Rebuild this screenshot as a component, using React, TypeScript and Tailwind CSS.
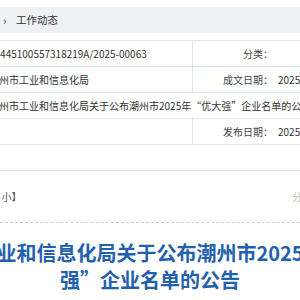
import React from "react";

const font = { fontFamily: '"Noto Sans CJK SC", "Noto Sans", sans-serif' };

function Row({ children }: { children: React.ReactNode }) {
  return <div className="flex h-[26px] border-t border-[#d9e5f0]">{children}</div>;
}

function LeftCell({ text }: { text: string }) {
  return (
    <div className="w-[193px] shrink-0 border-r border-[#d9e5f0] flex items-center overflow-hidden">
      <span className="ml-[-11px] whitespace-nowrap">{text}</span>
    </div>
  );
}

function RightCells({ label, value }: { label: string; value: string }) {
  return (
    <>
      <div className="w-[80px] shrink-0 flex items-center justify-end text-[#444]">{label}</div>
      <div className="flex-1 flex items-center pl-[5px] whitespace-nowrap overflow-hidden">{value}</div>
    </>
  );
}

export default function App() {
  return (
    <div className="w-[300px] h-[300px] overflow-hidden bg-white text-[10px] text-[#333]" style={font}>
      <div className="h-[7px]" />
      <div className="h-[26px] bg-[#eef1f4] flex items-center text-[10.5px] text-[#333]">
        <span className="ml-[3px] w-[13px] text-[11px]">›</span>
        <span>工作动态</span>
      </div>
      <div className="h-[7px]" />
      <div className="border-b border-[#e3e8ee]">
        <Row>
          <LeftCell text="11445100557318219A/2025-00063" />
          <RightCells label="分类：" value="" />
        </Row>
        <Row>
          <LeftCell text="潮州市工业和信息化局" />
          <RightCells label="成文日期：" value="2025-06-20" />
        </Row>
        <Row>
          <div className="flex-1 flex items-center overflow-hidden">
            <span className="ml-[-11px] whitespace-nowrap">
              潮州市工业和信息化局关于公布潮州市2025年“优大强”企业名单的公告
            </span>
          </div>
        </Row>
        <div className="flex h-[26px] border-t border-[#e3e8ee]">
          <LeftCell text="" />
          <RightCells label="发布日期：" value="2025-06-20" />
        </div>
        <div className="flex h-[26px] border-t border-[#e3e8ee]" />
      </div>
      <div className="h-[51px] flex items-center text-[10px] overflow-hidden">
        <span className="ml-[-63px] whitespace-nowrap text-[#555]">【字体：大 中 小】</span>
        <div className="flex-1" />
        <span className="mr-[-32px] whitespace-nowrap text-[#bbb]">分享到：</span>
      </div>
      <div className="border-t border-dashed border-[#cfcfcf]" />
      <div className="mt-[16px] flex flex-col items-center text-[20px] leading-[27px] font-bold text-[#2360ad]">
        <div className="whitespace-nowrap">潮州市工业和信息化局关于公布潮州市2025年“优大</div>
        <div className="whitespace-nowrap">强”企业名单的公告</div>
      </div>
    </div>
  );
}
